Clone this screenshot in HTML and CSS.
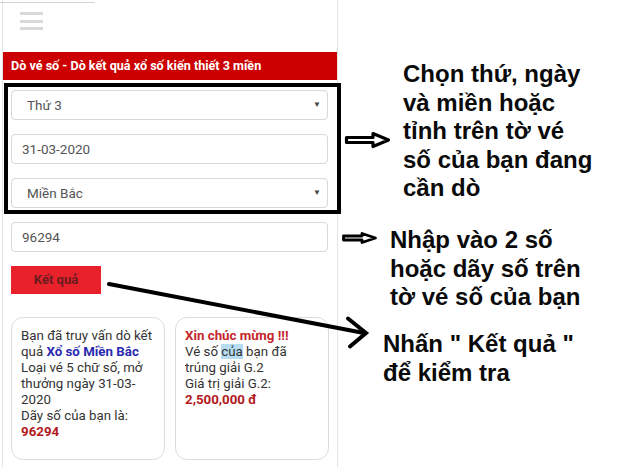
FILE: index.html
```html
<!DOCTYPE html>
<html lang="vi">
<head>
<meta charset="utf-8">
<title>Dò vé số</title>
<link rel="stylesheet" href="styles.css">
</head>
<body>
<div class="page">
  <div class="topbar">
    <div class="topline"></div>
    <div class="burger"><span></span><span></span><span></span></div>
  </div>
  <h1 class="title">Dò vé số - Dò kết quả xổ số kiến thiết 3 miền</h1>
  <div class="form">
    <div class="field select">Thứ 3<span class="caret">▼</span></div>
    <div class="field input">31-03-2020</div>
    <div class="field select">Miền Bắc<span class="caret">▼</span></div>
    <div class="field input">96294</div>
    <div class="btn">Kết quả</div>
  </div>
  <div class="cards">
    <div class="card">Bạn đã truy vấn dò kết<br>quả <b class="blue">Xổ số Miền Bắc</b><br>Loại vé 5 chữ số, mở<br>thưởng ngày 31-03-<br>2020<br>Dãy số của bạn là:<br><b class="red">96294</b></div>
    <div class="card"><b class="red2">Xin chúc mừng !!!</b><br>Vé số <span class="sel">của</span> bạn đã<br>trúng giải G.2<br>Giá trị giải G.2:<br><b class="red">2,500,000 đ</b></div>
  </div>
</div>

<div class="note note1">Chọn thứ, ngày<br>và miền hoặc<br>tỉnh trên tờ vé<br>số của bạn đang<br>cần dò</div>
<div class="note note2">Nhập vào 2 số<br>hoặc dãy số trên<br>tờ vé số của bạn</div>
<div class="note note3">Nhấn " Kết quả "<br>để kiểm tra</div>

<svg class="overlay" width="640" height="467" viewBox="0 0 640 467">
  <rect x="6" y="85" width="333" height="127" fill="none" stroke="#000" stroke-width="4"/>
  <polygon points="346.5,137.5 373,137.5 373,133.5 388.5,140 373,146.5 373,142.5 346.5,142.5" fill="#fff" stroke="#000" stroke-width="3.2" stroke-linejoin="round"/>
  <polygon points="343.5,236 362,236 362,233.5 375.5,238 362,242.5 362,240 343.5,240" fill="#fff" stroke="#000" stroke-width="2.8" stroke-linejoin="round"/>
  <line x1="109" y1="284" x2="364" y2="333" stroke="#000" stroke-width="4" stroke-linecap="round"/>
  <polyline points="348,318.5 366,333 350,346.5" fill="none" stroke="#000" stroke-width="4" stroke-linecap="round" stroke-linejoin="miter"/>
</svg>
</body>
</html>
```

FILE: styles.css
```css
html, body {
  margin: 0;
  padding: 0;
  background: #fff;
}
body {
  width: 640px;
  height: 467px;
  overflow: hidden;
  position: relative;
  font-family: Roboto, "Noto Sans", sans-serif;
}
.page {
  margin-left: 2px;
  width: 334px;
  height: 467px;
  border-left: 1px solid #e4e4e4;
  border-right: 1px solid #e4e4e4;
}
.topbar {
  height: 52px;
  padding-top: 2px;
  box-sizing: border-box;
}
.topline {
  margin-left: -3px;
  width: 95px;
  border-top: 1px solid #d4d4d4;
}
.burger {
  margin: 9px 0 0 17px;
  display: flex;
  flex-direction: column;
  gap: 4.5px;
  width: 23px;
}
.burger span {
  display: block;
  height: 3px;
  background: #d9d9d9;
}
.title {
  margin: 0;
  height: 28px;
  line-height: 28px;
  background: #cc0000;
  color: #fff;
  font-size: 12.6px;
  font-weight: 700;
  padding-left: 8px;
  white-space: nowrap;
}
.form {
  padding: 10px 9px 0 8px;
  display: flex;
  flex-direction: column;
  gap: 14px;
}
.field {
  height: 30px;
  box-sizing: border-box;
  border: 1px solid #d8d8d8;
  border-radius: 4px;
  font-size: 13.5px;
  line-height: 28px;
  color: #555;
  position: relative;
}
.select { padding-left: 15px; }
.input { padding-left: 10px; }
.caret {
  position: absolute;
  right: 6px;
  top: 0;
  font-size: 8px;
  color: #444;
}
.btn {
  width: 90px;
  height: 28px;
  line-height: 28px;
  background: #e8212a;
  color: #6a1c1e;
  font-weight: 700;
  font-size: 13px;
  text-align: center;
}
.cards {
  margin-top: 23px;
  padding-left: 8px;
  display: grid;
  grid-template-columns: 154px 154px;
  gap: 10px;
}
.card {
  height: 143px;
  box-sizing: border-box;
  border: 1px solid #dcdcdc;
  border-radius: 12px;
  padding: 10px 6px 0 9px;
  font-size: 13.3px;
  line-height: 16px;
  color: #333;
  white-space: nowrap;
}
.card b { font-weight: 700; }
.blue { color: #2a2ab0; }
.red { color: #b3191d; }
.red2 { color: #c4262b; }
.sel { background: #b5dcf0; }
.note {
  position: absolute;
  font-family: "Liberation Sans", Arial, sans-serif;
  font-weight: 700;
  font-size: 24px;
  line-height: 28.5px;
  color: #0a0a0a;
  white-space: nowrap;
}
.note1 { left: 403px; top: 60px; }
.note2 { left: 390px; top: 226px; }
.note3 { left: 383px; top: 330px; }
.overlay {
  position: absolute;
  left: 0;
  top: 0;
  pointer-events: none;
}
```
